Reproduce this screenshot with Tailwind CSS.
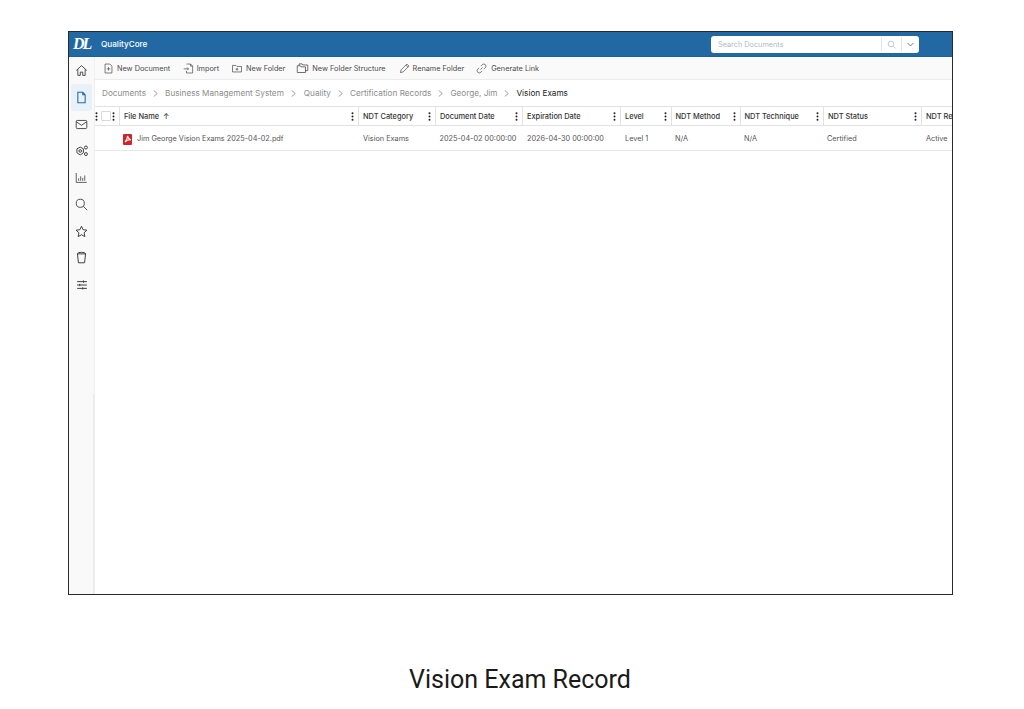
<!doctype html>
<html lang="en">

<head>
  <meta charset="utf-8">
  <title>Vision Exam Record</title>
  <script src="https://cdn.jsdelivr.net/npm/@tailwindcss/browser@4"></script>
</head>

<body class="bg-white font-['Inter','Liberation_Sans',sans-serif]">
  <div class="w-[1024px] h-[709px] overflow-hidden pt-[31px] pl-[68px]">

    <!-- app frame -->
    <div class="w-[885px] h-[564px] border border-[#2a2a2a] flex flex-col overflow-hidden">

      <!-- top bar -->
      <header class="h-[25px] shrink-0 bg-[#2269a4] flex items-center pl-[4px] text-white border-b border-[#1d5f97]">
        <span class="w-[24px] text-[16px] leading-none font-bold italic tracking-[-2px] font-['Liberation_Serif',serif]">DL</span>
        <span class="ml-[4px] w-[46px] text-[8.2px] font-medium pt-[1px]">QualityCore</span>
        <div class="ml-[564px] w-[208px] h-[17px] bg-white rounded-[3px] flex items-center text-[#b3b9bf]">
          <span class="pl-[7px] pt-[2px] text-[7.3px] w-[170px]">Search Documents</span>
          <span class="w-[20px] h-[13px] border-l border-[#e3e5e7] flex items-center justify-center">
            <svg class="w-[9px] h-[9px]" viewBox="0 0 16 16" fill="none" stroke="#a9afb5" stroke-width="1.2"><circle cx="7" cy="7" r="5"/><path d="M11 11l4 4"/></svg>
          </span>
          <span class="w-[18px] h-[13px] border-l border-[#e3e5e7] flex items-center justify-center">
            <svg class="w-[9px] h-[9px]" viewBox="0 0 16 16" fill="none" stroke="#5f6b76" stroke-width="1.6"><path d="M3 5.500l5 5 5-5"/></svg>
          </span>
        </div>
      </header>

      <div class="flex flex-1 min-h-0">

        <!-- sidebar -->
        <aside class="relative w-[26px] shrink-0 bg-[#f9f9f9] border-r border-[#f0f0f0] flex flex-col items-center text-[#3d3d3d]">
          <span class="absolute top-[337px] bottom-0 right-[-1px] w-[2px] bg-[#ececec]"></span>
          <span class="h-[27px] w-full flex items-center justify-center">
            <svg class="w-[13px] h-[13px]" viewBox="0 0 16 16" fill="none" stroke="currentColor" stroke-width="1.1"><path d="M1.500 8L8 2l6.500 6M3.500 6.500V14h3v-4h3v4h3V6.500"/></svg>
          </span>
          <span class="h-[27px] w-[21px] rounded-[3px] bg-[#e9f1f8] flex items-center justify-center">
            <svg class="w-[13px] h-[13px]" viewBox="0 0 16 16" fill="none" stroke="#2269a4" stroke-width="1.3"><path d="M3.500 1.500h6l3 3v10h-9zM9.500 1.500v3h3"/></svg>
          </span>
          <span class="h-[26px] w-full flex items-center justify-center">
            <svg class="w-[13px] h-[13px]" viewBox="0 0 16 16" fill="none" stroke="currentColor" stroke-width="1.1"><rect x="1.500" y="3" width="13" height="10" rx="1.200"/><path d="M1.500 4.500L8 9l6.500-4.500"/></svg>
          </span>
          <span class="h-[27px] w-full flex items-center justify-center">
            <svg class="w-[14px] h-[14px]" viewBox="0 0 16 16" fill="none" stroke="currentColor" stroke-width="1.100"><path d="M6 3.500l3.600 2v4.500L6 12.500l-3.800-2.500V5.500z"/><circle cx="6" cy="8" r="1.500"/><circle cx="12.500" cy="4" r="1.700"/><circle cx="12.500" cy="11.500" r="1.700"/></svg>
          </span>
          <span class="h-[27px] w-full flex items-center justify-center">
            <svg class="w-[13px] h-[13px]" viewBox="0 0 16 16" fill="none" stroke="currentColor" stroke-width="1"><path d="M1.500 2.500v11.500h13M4.500 12V9M7 12V6.500M9.500 12V8.500M12 12V5.500"/></svg>
          </span>
          <span class="h-[27px] w-full flex items-center justify-center">
            <svg class="w-[13px] h-[13px]" viewBox="0 0 16 16" fill="none" stroke="currentColor" stroke-width="1.100"><circle cx="6.500" cy="6.500" r="5"/><path d="M10.200 10.200L15 15"/></svg>
          </span>
          <span class="h-[26px] w-full flex items-center justify-center">
            <svg class="w-[13px] h-[13px]" viewBox="0 0 16 16" fill="none" stroke="currentColor" stroke-width="1.200"><path d="M8 1.500l2 4.300 4.700.6-3.500 3.200.9 4.700L8 12l-4.100 2.300.9-4.700L1.300 6.400 6 5.800z"/></svg>
          </span>
          <span class="h-[27px] w-full flex items-center justify-center">
            <svg class="w-[13px] h-[13px]" viewBox="0 0 16 16" fill="none" stroke="currentColor" stroke-width="1.200"><path d="M3 3.500h10l-1.200 11H4.200zM3 3.500c0-2.500 10-2.500 10 0"/></svg>
          </span>
          <span class="h-[27px] w-full flex items-center justify-center">
            <svg class="w-[12px] h-[12px]" viewBox="0 0 16 16" fill="none" stroke="currentColor" stroke-width="1.300"><path d="M1.500 3.500h13M1.500 8h13M1.500 12.500h13M10 2v3M5 6.500v3M9 11v3"/></svg>
          </span>
        </aside>

        <main class="flex-1 min-w-0 flex flex-col">

          <!-- toolbar -->
          <div class="h-[23px] shrink-0 bg-[#fafafa] border-b border-[#ececec] flex items-center pl-[8px] text-[7.3px] text-[#4a4a4a]">
            <svg class="w-[11px] h-[11px] mr-[3px]" viewBox="0 0 16 16" fill="none" stroke="#444" stroke-width="1"><path d="M3 1.500h7l3 3v10H3zM8 6v5M5.500 8.500h5"/></svg>
            <span class="mr-[12.500px] pt-[2px]">New Document</span>
            <svg class="w-[11px] h-[11px] mr-[3px]" viewBox="0 0 16 16" fill="none" stroke="#444" stroke-width="1"><path d="M5 1.500h6l3 3v10H5v-3M11 1.500v3h3M1 8.500h7M6 6.500l2 2-2 2"/></svg>
            <span class="mr-[12px] pt-[2px]">Import</span>
            <svg class="w-[12px] h-[11px] mr-[3px]" viewBox="0 0 16 16" fill="none" stroke="#444" stroke-width="1"><path d="M1.500 3.500h5l1.500 1.500h6.500v8h-13zM8 7v4M6 9h4"/></svg>
            <span class="mr-[11px] pt-[2px]">New Folder</span>
            <svg class="w-[13px] h-[12px] mr-[3px]" viewBox="0 0 16 16" fill="none" stroke="#444" stroke-width="1"><path d="M1 5h4l1 1.500h6v7.500H1zM3.500 5V2.500h4L8.500 4H15v7.500h-3"/></svg>
            <span class="mr-[13px] pt-[2px]">New Folder Structure</span>
            <svg class="w-[11px] h-[11px] mr-[3px]" viewBox="0 0 16 16" fill="none" stroke="#444" stroke-width="1"><path d="M2 14l1-4L11.500 1.500l3 3L6 13zM10 3l3 3"/></svg>
            <span class="mr-[12px] pt-[2px]">Rename Folder</span>
            <svg class="w-[11px] h-[11px] mr-[4px]" viewBox="0 0 16 16" fill="none" stroke="#444" stroke-width="1"><path d="M6.500 9.500l3-3M7 4.500l2-2a3 3 0 0 1 4.500 4.500l-2 2M9 11.500l-2 2A3 3 0 0 1 2.500 9l2-2"/></svg>
            <span class="pt-[2px]">Generate Link</span>
          </div>

          <!-- breadcrumb -->
          <nav class="h-[26px] shrink-0 flex items-center pl-[7px] pt-[1px] text-[8.2px] text-[#8c8c8c]">
            <span>Documents</span>
            <span class="w-[19px] flex justify-center"><svg class="w-[7px] h-[7px]" viewBox="0 0 8 8" fill="none" stroke="#777" stroke-width="0.800"><path d="M2 .5L6 4 2 7.500"/></svg></span>
            <span>Business Management System</span>
            <span class="w-[20px] flex justify-center"><svg class="w-[7px] h-[7px]" viewBox="0 0 8 8" fill="none" stroke="#777" stroke-width="0.800"><path d="M2 .5L6 4 2 7.500"/></svg></span>
            <span>Quality</span>
            <span class="w-[19px] flex justify-center"><svg class="w-[7px] h-[7px]" viewBox="0 0 8 8" fill="none" stroke="#777" stroke-width="0.800"><path d="M2 .5L6 4 2 7.500"/></svg></span>
            <span>Certification Records</span>
            <span class="w-[19px] flex justify-center"><svg class="w-[7px] h-[7px]" viewBox="0 0 8 8" fill="none" stroke="#777" stroke-width="0.800"><path d="M2 .5L6 4 2 7.500"/></svg></span>
            <span>George, Jim</span>
            <span class="w-[19px] flex justify-center"><svg class="w-[7px] h-[7px]" viewBox="0 0 8 8" fill="none" stroke="#777" stroke-width="0.800"><path d="M2 .5L6 4 2 7.500"/></svg></span>
            <span class="text-[#222]">Vision Exams</span>
          </nav>

          <!-- grid header -->
          <div class="h-[20px] shrink-0 grid grid-cols-[24px_239px_77px_87px_98px_51px_69px_83px_98px_100px] border-y border-[#e2e2e2] text-[7.4px] font-medium text-[#333]">
            <div class="flex items-center pl-[0px]">
              <svg class="w-[3px] h-[9px] ml-[0px]" viewBox="0 0 3 9" fill="#222"><circle cx="1.500" cy="1.200" r="1"/><circle cx="1.500" cy="4.500" r="1"/><circle cx="1.500" cy="7.800" r="1"/></svg>
              <span class="w-[10px] h-[10px] ml-[3px] border border-[#d9d9d9] rounded-[1px] bg-white"></span>
              <svg class="w-[3px] h-[9px] ml-[1px]" viewBox="0 0 3 9" fill="#222"><circle cx="1.500" cy="1.200" r="1"/><circle cx="1.500" cy="4.500" r="1"/><circle cx="1.500" cy="7.800" r="1"/></svg>
            </div>
            <div class="flex items-center justify-between pl-[4px] pr-[4.500px] border-l border-[#e2e2e2]"><span class="pt-[2px]">File Name &nbsp;↑</span><svg class="w-[3px] h-[9px]" viewBox="0 0 3 9" fill="#222"><circle cx="1.500" cy="1.200" r="1"/><circle cx="1.500" cy="4.500" r="1"/><circle cx="1.500" cy="7.800" r="1"/></svg></div>
            <div class="flex items-center justify-between pl-[4px] pr-[4.500px] border-l border-[#e2e2e2]"><span class="pt-[2px]">NDT Category</span><svg class="w-[3px] h-[9px]" viewBox="0 0 3 9" fill="#222"><circle cx="1.500" cy="1.200" r="1"/><circle cx="1.500" cy="4.500" r="1"/><circle cx="1.500" cy="7.800" r="1"/></svg></div>
            <div class="flex items-center justify-between pl-[4px] pr-[4.500px] border-l border-[#e2e2e2]"><span class="pt-[2px]">Document Date</span><svg class="w-[3px] h-[9px]" viewBox="0 0 3 9" fill="#222"><circle cx="1.500" cy="1.200" r="1"/><circle cx="1.500" cy="4.500" r="1"/><circle cx="1.500" cy="7.800" r="1"/></svg></div>
            <div class="flex items-center justify-between pl-[4px] pr-[4.500px] border-l border-[#e2e2e2]"><span class="pt-[2px]">Expiration Date</span><svg class="w-[3px] h-[9px]" viewBox="0 0 3 9" fill="#222"><circle cx="1.500" cy="1.200" r="1"/><circle cx="1.500" cy="4.500" r="1"/><circle cx="1.500" cy="7.800" r="1"/></svg></div>
            <div class="flex items-center justify-between pl-[4px] pr-[4.500px] border-l border-[#e2e2e2]"><span class="pt-[2px]">Level</span><svg class="w-[3px] h-[9px]" viewBox="0 0 3 9" fill="#222"><circle cx="1.500" cy="1.200" r="1"/><circle cx="1.500" cy="4.500" r="1"/><circle cx="1.500" cy="7.800" r="1"/></svg></div>
            <div class="flex items-center justify-between pl-[3.500px] pr-[4.500px] border-l border-[#e2e2e2]"><span class="pt-[2px]">NDT Method</span><svg class="w-[3px] h-[9px]" viewBox="0 0 3 9" fill="#222"><circle cx="1.500" cy="1.200" r="1"/><circle cx="1.500" cy="4.500" r="1"/><circle cx="1.500" cy="7.800" r="1"/></svg></div>
            <div class="flex items-center justify-between pl-[3.500px] pr-[4.500px] border-l border-[#e2e2e2]"><span class="pt-[2px]">NDT Technique</span><svg class="w-[3px] h-[9px]" viewBox="0 0 3 9" fill="#222"><circle cx="1.500" cy="1.200" r="1"/><circle cx="1.500" cy="4.500" r="1"/><circle cx="1.500" cy="7.800" r="1"/></svg></div>
            <div class="flex items-center justify-between pl-[4px] pr-[4.500px] border-l border-[#e2e2e2]"><span class="pt-[2px]">NDT Status</span><svg class="w-[3px] h-[9px]" viewBox="0 0 3 9" fill="#222"><circle cx="1.500" cy="1.200" r="1"/><circle cx="1.500" cy="4.500" r="1"/><circle cx="1.500" cy="7.800" r="1"/></svg></div>
            <div class="flex items-center pl-[4px] border-l border-[#e2e2e2] whitespace-nowrap"><span class="pt-[2px]">NDT Re</span></div>
          </div>

          <!-- grid row -->
          <div class="h-[25px] shrink-0 grid grid-cols-[24px_239px_77px_87px_98px_51px_69px_83px_98px_100px] items-center pt-[2px] border-b border-[#e8e8e8] text-[7.3px] text-[#555]">
            <div></div>
            <div class="flex items-center pl-[4px]">
              <span class="w-[9px] h-[11px] bg-[#d2232a] rounded-[1px] flex items-center justify-center mr-[5px]">
                <svg class="w-[8px] h-[8px]" viewBox="0 0 16 16" fill="none" stroke="#fff" stroke-width="2.200"><path d="M7 2c0 5-2 9-5 12 3-3 8-5 12-4-3-1-6-4-7-8z"/></svg>
              </span>
              <span>Jim George Vision Exams 2025-04-02.pdf</span>
            </div>
            <div class="pl-[5px]">Vision Exams</div>
            <div class="pl-[4.500px] whitespace-nowrap">2025-04-02 00:00:00</div>
            <div class="pl-[5px] whitespace-nowrap">2026-04-30 00:00:00</div>
            <div class="pl-[5px]">Level 1</div>
            <div class="pl-[4px]">N/A</div>
            <div class="pl-[4px]">N/A</div>
            <div class="pl-[4px]">Certified</div>
            <div class="pl-[5px]">Active</div>
          </div>
        </main>
      </div>
    </div>

    <!-- caption -->
    <p class="w-[904px] mt-[69px] text-center text-[25px] leading-[32px] text-[#1a1a1a] font-['Roboto',sans-serif]">Vision Exam Record</p>
  </div>
</body>

</html>
